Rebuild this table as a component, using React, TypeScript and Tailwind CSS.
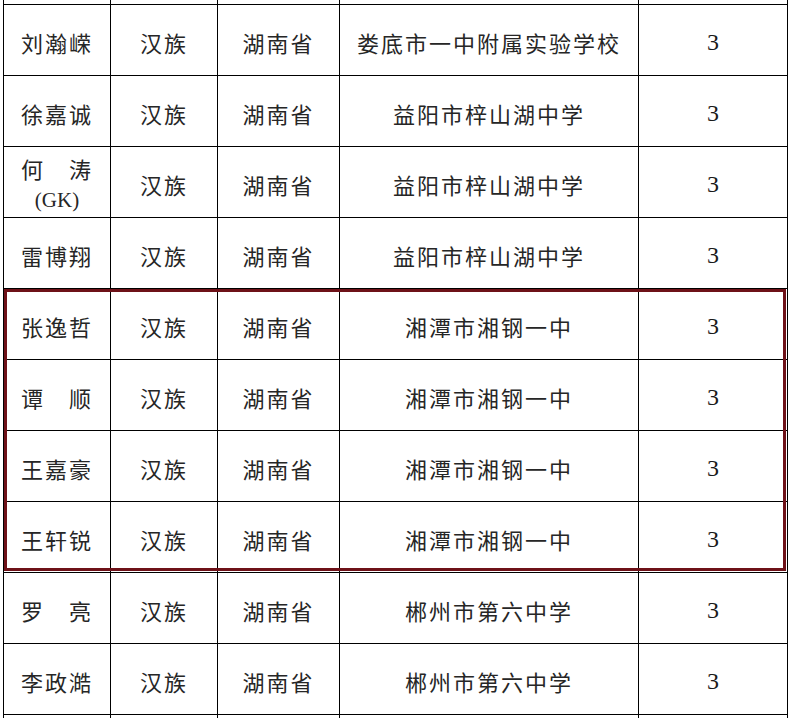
import React from 'react';

type Row = { name: string; sub?: string; nation: string; province: string; school: string; grade: string };

const rows: Row[] = [
    { name: '刘瀚嵘', nation: '汉族', province: '湖南省', school: '娄底市一中附属实验学校', grade: '3' },
    { name: '徐嘉诚', nation: '汉族', province: '湖南省', school: '益阳市梓山湖中学', grade: '3' },
    { name: '何　涛', sub: '(GK)', nation: '汉族', province: '湖南省', school: '益阳市梓山湖中学', grade: '3' },
    { name: '雷博翔', nation: '汉族', province: '湖南省', school: '益阳市梓山湖中学', grade: '3' },
    { name: '张逸哲', nation: '汉族', province: '湖南省', school: '湘潭市湘钢一中', grade: '3' },
    { name: '谭　顺', nation: '汉族', province: '湖南省', school: '湘潭市湘钢一中', grade: '3' },
    { name: '王嘉豪', nation: '汉族', province: '湖南省', school: '湘潭市湘钢一中', grade: '3' },
    { name: '王轩锐', nation: '汉族', province: '湖南省', school: '湘潭市湘钢一中', grade: '3' },
    { name: '罗　亮', nation: '汉族', province: '湖南省', school: '郴州市第六中学', grade: '3' },
    { name: '李政澔', nation: '汉族', province: '湖南省', school: '郴州市第六中学', grade: '3' },
];

const cjk = "font-['Noto_Sans_CJK_SC',sans-serif]";
const serif = "font-['Liberation_Serif','Times_New_Roman',serif]";

// fixed column widths, each one includes its right border
const cols = ['w-[107px]', 'w-[107px]', 'w-[122px]', 'w-[299px]', 'w-[149px]'];

const Cell: React.FC<{ w: string; children?: React.ReactNode }> = ({ w, children }) => (
    <div className={`${w} shrink-0 border-r border-black flex flex-col items-center justify-center pt-[3px]`}>
        {children}
    </div>
);

const Txt: React.FC<{ children: React.ReactNode }> = ({ children }) => (
    <span className={`${cjk} text-[22px] leading-none tracking-[2px] text-[#262626] whitespace-pre`}>{children}</span>
);

export default function App() {
    return (
        <div className="w-[792px] h-[718px] bg-white overflow-hidden relative">
            <div className="ml-[3px] w-[785px] border-l border-black">
                {/* tail of the row above, cut off by the picture */}
                <div className="flex h-[5px] border-b border-black">
                    {cols.map((w, i) => <Cell key={i} w={w} />)}
                </div>

                {rows.map((r, idx) => (
                    <div key={idx} className="flex h-[71px] border-b border-black">
                        <Cell w={cols[0]}>
                            <Txt>{r.name}</Txt>
                            {r.sub && (
                                <span className={`${serif} text-[21px] leading-none mt-[11px] text-[#262626]`}>{r.sub}</span>
                            )}
                        </Cell>
                        <Cell w={cols[1]}><Txt>{r.nation}</Txt></Cell>
                        <Cell w={cols[2]}><Txt>{r.province}</Txt></Cell>
                        <Cell w={cols[3]}><Txt>{r.school}</Txt></Cell>
                        <Cell w={cols[4]}>
                            <span className={`${serif} text-[24px] leading-none text-[#1a1a1a]`}>{r.grade}</span>
                        </Cell>
                    </div>
                ))}

                {/* next row, only its top shows */}
                <div className="flex h-[71px]">
                    {cols.map((w, i) => <Cell key={i} w={w} />)}
                </div>
            </div>

            {/* highlight frame over the 湘钢一中 rows */}
            <div className="absolute left-[4px] top-[289px] w-[782px] h-[282px] border-[3px] border-[#6e1118] pointer-events-none" />
        </div>
    );
}
